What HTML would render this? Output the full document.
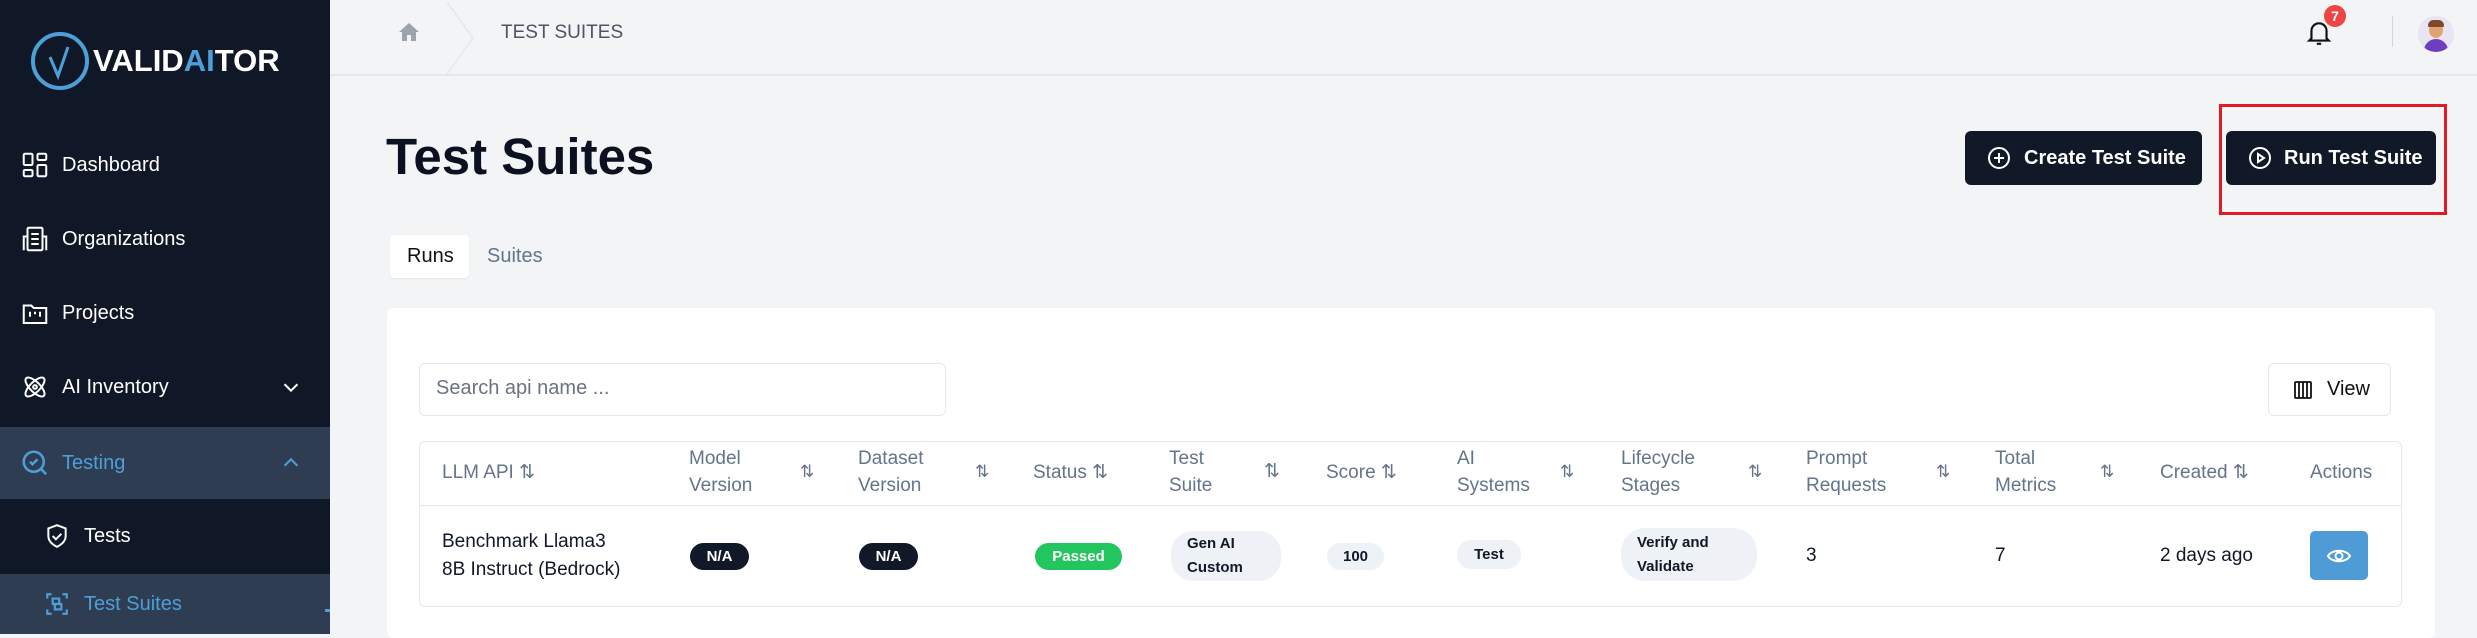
<!DOCTYPE html>
<html><head><meta charset="utf-8"><style>
*{margin:0;padding:0;box-sizing:border-box}
body{width:2477px;height:627px;overflow:hidden;background:#f3f4f6;font-family:"Liberation Sans",sans-serif;position:relative}
.a{position:absolute}
.sb{left:0;top:0;width:330px;height:627px;background:#101828}
.nav{position:absolute;left:0;width:330px;color:#fff;font-size:20px;display:flex;align-items:center}
.nav svg{position:absolute;left:20px}
.nav span{position:absolute;left:62px}
.hl{background:#2f3d52}
.th{position:absolute;color:#64748b;font-size:19px;line-height:27px}
.si{position:absolute;color:#64748b;font-size:17px}
.td{position:absolute;color:#111827;font-size:19px;line-height:28px}
.pill{position:absolute;border-radius:14px;display:flex;align-items:center;justify-content:center;font-weight:bold;font-size:15px}
.dk{background:#111827;color:#fff}
.lt{background:#eef2f7;color:#111827;justify-content:flex-start;padding-left:16px;line-height:24px}
.btn{position:absolute;background:#111827;color:#fff;border-radius:6px;font-size:20px;font-weight:bold;display:flex;align-items:center}
</style></head><body>
<div class="a sb">
 <svg class="a" style="left:30px;top:31px" width="60" height="60" viewBox="0 0 60 60"><circle cx="30" cy="30" r="27" fill="none" stroke="#4d9fd8" stroke-width="4"/><path d="M20 26 L28 45 L38 16" fill="none" stroke="#4d9fd8" stroke-width="3"/></svg>
 <div class="a" style="left:93px;top:43px;font-size:31px;font-weight:bold;color:#fff">VALID<span style="color:#4d9fd8">AI</span>TOR</div>
 <div class="nav" style="top:150px;height:30px"><svg width="30" height="30" viewBox="0 0 24 24" fill="none" stroke="#fff" stroke-width="1.6"><rect x="3" y="3" width="7" height="9" rx="1"/><rect x="14" y="3" width="7" height="5" rx="1"/><rect x="14" y="12" width="7" height="9" rx="1"/><rect x="3" y="16" width="7" height="5" rx="1"/></svg><span>Dashboard</span></div>
 <div class="nav" style="top:224px;height:30px"><svg width="30" height="30" viewBox="0 0 24 24" fill="none" stroke="#fff" stroke-width="1.6"><rect x="6" y="3" width="12" height="18" rx="1"/><path d="M3 21V10h3M21 21V10h-3M9 8h6M9 12h6M9 16h6"/></svg><span>Organizations</span></div>
 <div class="nav" style="top:298px;height:30px"><svg width="30" height="30" viewBox="0 0 24 24" fill="none" stroke="#fff" stroke-width="1.6"><path d="M3 6h6l2 2h10v12H3z"/><path d="M8 11v4M12 11v2M16 11v4"/></svg><span>Projects</span></div>
 <div class="nav" style="top:372px;height:30px"><svg width="30" height="30" viewBox="0 0 24 24" fill="none" stroke="#fff" stroke-width="1.6"><ellipse cx="12" cy="12" rx="10" ry="4" transform="rotate(45 12 12)"/><ellipse cx="12" cy="12" rx="10" ry="4" transform="rotate(-45 12 12)"/><circle cx="12" cy="12" r="1.5"/></svg><span>AI Inventory</span><svg style="left:280px" width="22" height="22" viewBox="0 0 24 24" fill="none" stroke="#fff" stroke-width="2.2"><path d="M5 9l7 7 7-7"/></svg></div>
 <div class="nav hl" style="top:427px;height:72px;color:#4d9fd8"><svg width="30" height="30" viewBox="0 0 24 24" fill="none" stroke="#4d9fd8" stroke-width="2"><circle cx="11" cy="11" r="8"/><path d="M17 17l4 4M8 11l2 2 4-4"/></svg><span>Testing</span><svg style="left:280px" width="22" height="22" viewBox="0 0 24 24" fill="none" stroke="#4d9fd8" stroke-width="2.2"><path d="M5 15l7-7 7 7"/></svg></div>
 <div class="nav" style="top:521px;height:30px"><svg style="left:44px" width="26" height="30" viewBox="0 0 24 24" fill="none" stroke="#fff" stroke-width="1.8"><path d="M12 2l8 3v7c0 5-4 8-8 10-4-2-8-5-8-10V5z"/><path d="M8 12l3 3 5-5"/></svg><span style="left:84px">Tests</span></div>
 <div class="nav hl" style="top:574px;height:60px;color:#4d9fd8"><svg style="left:44px" width="26" height="26" viewBox="0 0 24 24" fill="none" stroke="#4d9fd8" stroke-width="2"><path d="M3 7V3h4M17 3h4v4M21 17v4h-4M7 21H3v-4"/><rect x="8" y="7" width="6" height="5"/><rect x="10" y="12" width="6" height="5"/></svg><span style="left:84px">Test Suites</span></div>
 <div class="a" style="left:325px;top:609px;width:5px;height:3px;background:#4d9fd8"></div>
</div>
<div class="a" style="left:330px;top:0;width:2147px;height:76px;background:#f3f4f6;border-bottom:2px solid #e5e7eb"></div>
<svg class="a" style="left:397px;top:20px" width="24" height="24" viewBox="0 0 24 24"><path d="M12 3L2 12h3v9h5v-6h4v6h5v-9h3z" fill="#9ca3af"/></svg>
<svg class="a" style="left:445px;top:0" width="32" height="76"><path d="M2 2 L28 38 L2 74" fill="none" stroke="#e5e7eb" stroke-width="1.5"/></svg>
<div class="a" style="left:501px;top:22px;font-size:19px;color:#4b5563">TEST SUITES</div>
<svg class="a" style="left:2306px;top:19px" width="26" height="28" viewBox="0 0 24 26" fill="none" stroke="#111" stroke-width="2"><path d="M5 18V11a7 7 0 0 1 14 0v7l2 2H3z"/><path d="M10 23h4"/></svg>
<div class="a" style="left:2324px;top:5px;width:22px;height:22px;border-radius:50%;background:#ef4444;color:#fff;font-size:14px;font-weight:bold;text-align:center;line-height:22px">7</div>
<div class="a" style="left:2392px;top:16px;width:1px;height:31px;background:#d1d5db"></div>
<div class="a" style="left:2418px;top:16px;width:36px;height:36px;border-radius:50%;background:#e8e4f3;overflow:hidden"><div class="a" style="left:11px;top:6px;width:14px;height:16px;border-radius:50%;background:#e0a370"></div><div class="a" style="left:10px;top:4px;width:16px;height:7px;border-radius:8px 8px 2px 2px;background:#7a4a2a"></div><div class="a" style="left:6px;top:23px;width:24px;height:16px;border-radius:12px 12px 0 0;background:#6d3fc0"></div></div>
<div class="a" style="left:386px;top:127px;font-size:51px;font-weight:bold;color:#0b1120">Test Suites</div>
<div class="btn" style="left:1965px;top:131px;width:237px;height:54px"><svg style="margin-left:22px" width="24" height="24" viewBox="0 0 24 24" fill="none" stroke="#fff" stroke-width="2"><circle cx="12" cy="12" r="10"/><path d="M12 7v10M7 12h10"/></svg><span style="margin-left:13px">Create Test Suite</span></div>
<div class="btn" style="left:2226px;top:131px;width:210px;height:54px"><svg style="margin-left:22px" width="24" height="24" viewBox="0 0 24 24" fill="none" stroke="#fff" stroke-width="2"><circle cx="12" cy="12" r="10"/><path d="M10 8l6 4-6 4z"/></svg><span style="margin-left:12px">Run Test Suite</span></div>
<div class="a" style="left:2219px;top:104px;width:228px;height:111px;border:3px solid #e21b23"></div>
<div class="a" style="left:390px;top:235px;width:79px;height:43px;background:#fff;border-radius:4px;box-shadow:0 1px 2px rgba(0,0,0,.06)"></div>
<div class="a" style="left:407px;top:245px;font-size:20px;color:#111">Runs</div>
<div class="a" style="left:487px;top:245px;font-size:20px;color:#64748b">Suites</div>
<div class="a" style="left:387px;top:308px;width:2048px;height:330px;background:#fff;border-radius:6px"></div>
<div class="a" style="left:419px;top:363px;width:527px;height:53px;border:1px solid #e2e8f0;border-radius:6px"></div>
<div class="a" style="left:436px;top:377px;font-size:20px;color:#6b7280">Search api name ...</div>
<div class="a" style="left:2268px;top:363px;width:123px;height:53px;border:1px solid #e2e8f0;border-radius:6px;display:flex;align-items:center"><svg style="margin-left:24px" width="20" height="20" viewBox="0 0 20 20" fill="none" stroke="#111" stroke-width="1.8"><rect x="2" y="2" width="16" height="16" rx="1"/><path d="M6 2v16M10 2v16M14 2v16"/></svg><span style="margin-left:14px;font-size:20px;color:#111">View</span></div>
<div class="a" style="left:419px;top:441px;width:1983px;height:166px;border:1px solid #e2e8f0;border-radius:6px"></div>
<div class="a" style="left:419px;top:505px;width:1983px;height:1px;background:#e2e8f0"></div>
<div class="th" style="left:442px;top:459px">LLM API ⇅</div>
<div class="th" style="left:689px;top:445px">Model<br>Version</div><div class="si" style="left:800px;top:462px">⇅</div>
<div class="th" style="left:858px;top:445px">Dataset<br>Version</div><div class="si" style="left:975px;top:462px">⇅</div>
<div class="th" style="left:1033px;top:459px">Status ⇅</div>
<div class="th" style="left:1169px;top:445px">Test<br>Suite</div><div class="si" style="left:1264px;top:460px;font-size:19px">⇅</div>
<div class="th" style="left:1326px;top:459px">Score ⇅</div>
<div class="th" style="left:1457px;top:445px">AI<br>Systems</div><div class="si" style="left:1560px;top:462px">⇅</div>
<div class="th" style="left:1621px;top:445px">Lifecycle<br>Stages</div><div class="si" style="left:1748px;top:462px">⇅</div>
<div class="th" style="left:1806px;top:445px">Prompt<br>Requests</div><div class="si" style="left:1936px;top:462px">⇅</div>
<div class="th" style="left:1995px;top:445px">Total<br>Metrics</div><div class="si" style="left:2100px;top:462px">⇅</div>
<div class="th" style="left:2160px;top:459px">Created ⇅</div>
<div class="th" style="left:2310px;top:459px">Actions</div>
<div class="td" style="left:442px;top:528px">Benchmark Llama3<br>8B Instruct (Bedrock)</div>
<div class="pill dk" style="left:690px;top:543px;width:59px;height:27px">N/A</div>
<div class="pill dk" style="left:859px;top:543px;width:59px;height:27px">N/A</div>
<div class="pill" style="left:1035px;top:543px;width:87px;height:27px;background:#22c55e;color:#fff">Passed</div>
<div class="pill lt" style="left:1171px;top:531px;width:110px;height:50px;border-radius:22px">Gen AI<br>Custom</div>
<div class="pill" style="left:1327px;top:543px;width:57px;height:27px;background:#eef2f7;color:#111827">100</div>
<div class="pill" style="left:1457px;top:540px;width:64px;height:29px;background:#eef2f7;color:#111827">Test</div>
<div class="pill lt" style="left:1621px;top:528px;width:136px;height:53px;border-radius:24px">Verify and<br>Validate</div>
<div class="td" style="left:1806px;top:542px">3</div>
<div class="td" style="left:1995px;top:542px">7</div>
<div class="td" style="left:2160px;top:542px">2 days ago</div>
<div class="a" style="left:2310px;top:531px;width:58px;height:49px;background:#4f9bd6;border-radius:5px;display:flex;align-items:center;justify-content:center"><svg width="26" height="20" viewBox="0 0 26 20" fill="none" stroke="#fff" stroke-width="2"><path d="M2 10C6 3 20 3 24 10 20 17 6 17 2 10z"/><circle cx="13" cy="10" r="3.5"/></svg></div>
</body></html>
